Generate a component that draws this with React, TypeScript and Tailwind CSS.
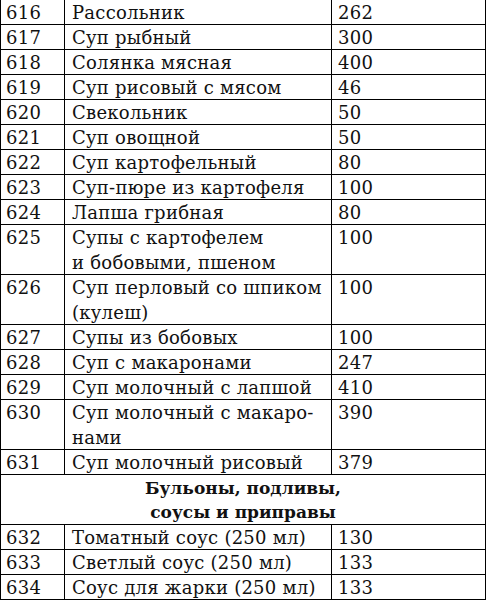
type Row = { n: string; name: string[]; v: string }

const before: Row[] = [
  { n: '616', name: ['Рассольник'], v: '262' },
  { n: '617', name: ['Суп рыбный'], v: '300' },
  { n: '618', name: ['Солянка мясная'], v: '400' },
  { n: '619', name: ['Суп рисовый с мясом'], v: '46' },
  { n: '620', name: ['Свекольник'], v: '50' },
  { n: '621', name: ['Суп овощной'], v: '50' },
  { n: '622', name: ['Суп картофельный'], v: '80' },
  { n: '623', name: ['Суп-пюре из картофеля'], v: '100' },
  { n: '624', name: ['Лапша грибная'], v: '80' },
  { n: '625', name: ['Супы с картофелем', 'и бобовыми, пшеном'], v: '100' },
  { n: '626', name: ['Суп перловый со шпиком', '(кулеш)'], v: '100' },
  { n: '627', name: ['Супы из бобовых'], v: '100' },
  { n: '628', name: ['Суп с макаронами'], v: '247' },
  { n: '629', name: ['Суп молочный с лапшой'], v: '410' },
  { n: '630', name: ['Суп молочный с макаро-', 'нами'], v: '390' },
  { n: '631', name: ['Суп молочный рисовый'], v: '379' },
]

const after: Row[] = [
  { n: '632', name: ['Томатный соус (250 мл)'], v: '130' },
  { n: '633', name: ['Светлый соус (250 мл)'], v: '133' },
  { n: '634', name: ['Соус для жарки (250 мл)'], v: '133' },
]

function TableRow({ row }: { row: Row }) {
  const tall = row.name.length > 1
  return (
    <div
      className={`grid grid-cols-[64px_267px_1fr] border-b border-black ${tall ? 'h-[50px]' : 'h-[25px]'}`}
    >
      <div className="border-r border-black pl-[5px]">{row.n}</div>
      <div className="border-r border-black pl-[7px]">
        {row.name.map((line, i) => (
          <div key={i}>{line}</div>
        ))}
      </div>
      <div className="pl-[6px]">{row.v}</div>
    </div>
  )
}

export default function App() {
  return (
    <div
      className="w-[486px] h-[601px] bg-white text-[#111] text-[18px] leading-[25px] tracking-[0.25px] overflow-hidden"
      style={{ fontFamily: '"DejaVu Serif", "Liberation Serif", serif' }}
    >
      <div className="border-l border-r border-black">
        {before.map(r => (
          <TableRow key={r.n} row={r} />
        ))}

        {/* section header */}
        <div className="h-[50px] border-b border-black text-center font-bold text-[17px] tracking-normal pt-[1px]">
          <div className="leading-[24px]">Бульоны, подливы,</div>
          <div className="leading-[24px]">соусы и приправы</div>
        </div>

        {after.map(r => (
          <TableRow key={r.n} row={r} />
        ))}
      </div>
    </div>
  )
}
